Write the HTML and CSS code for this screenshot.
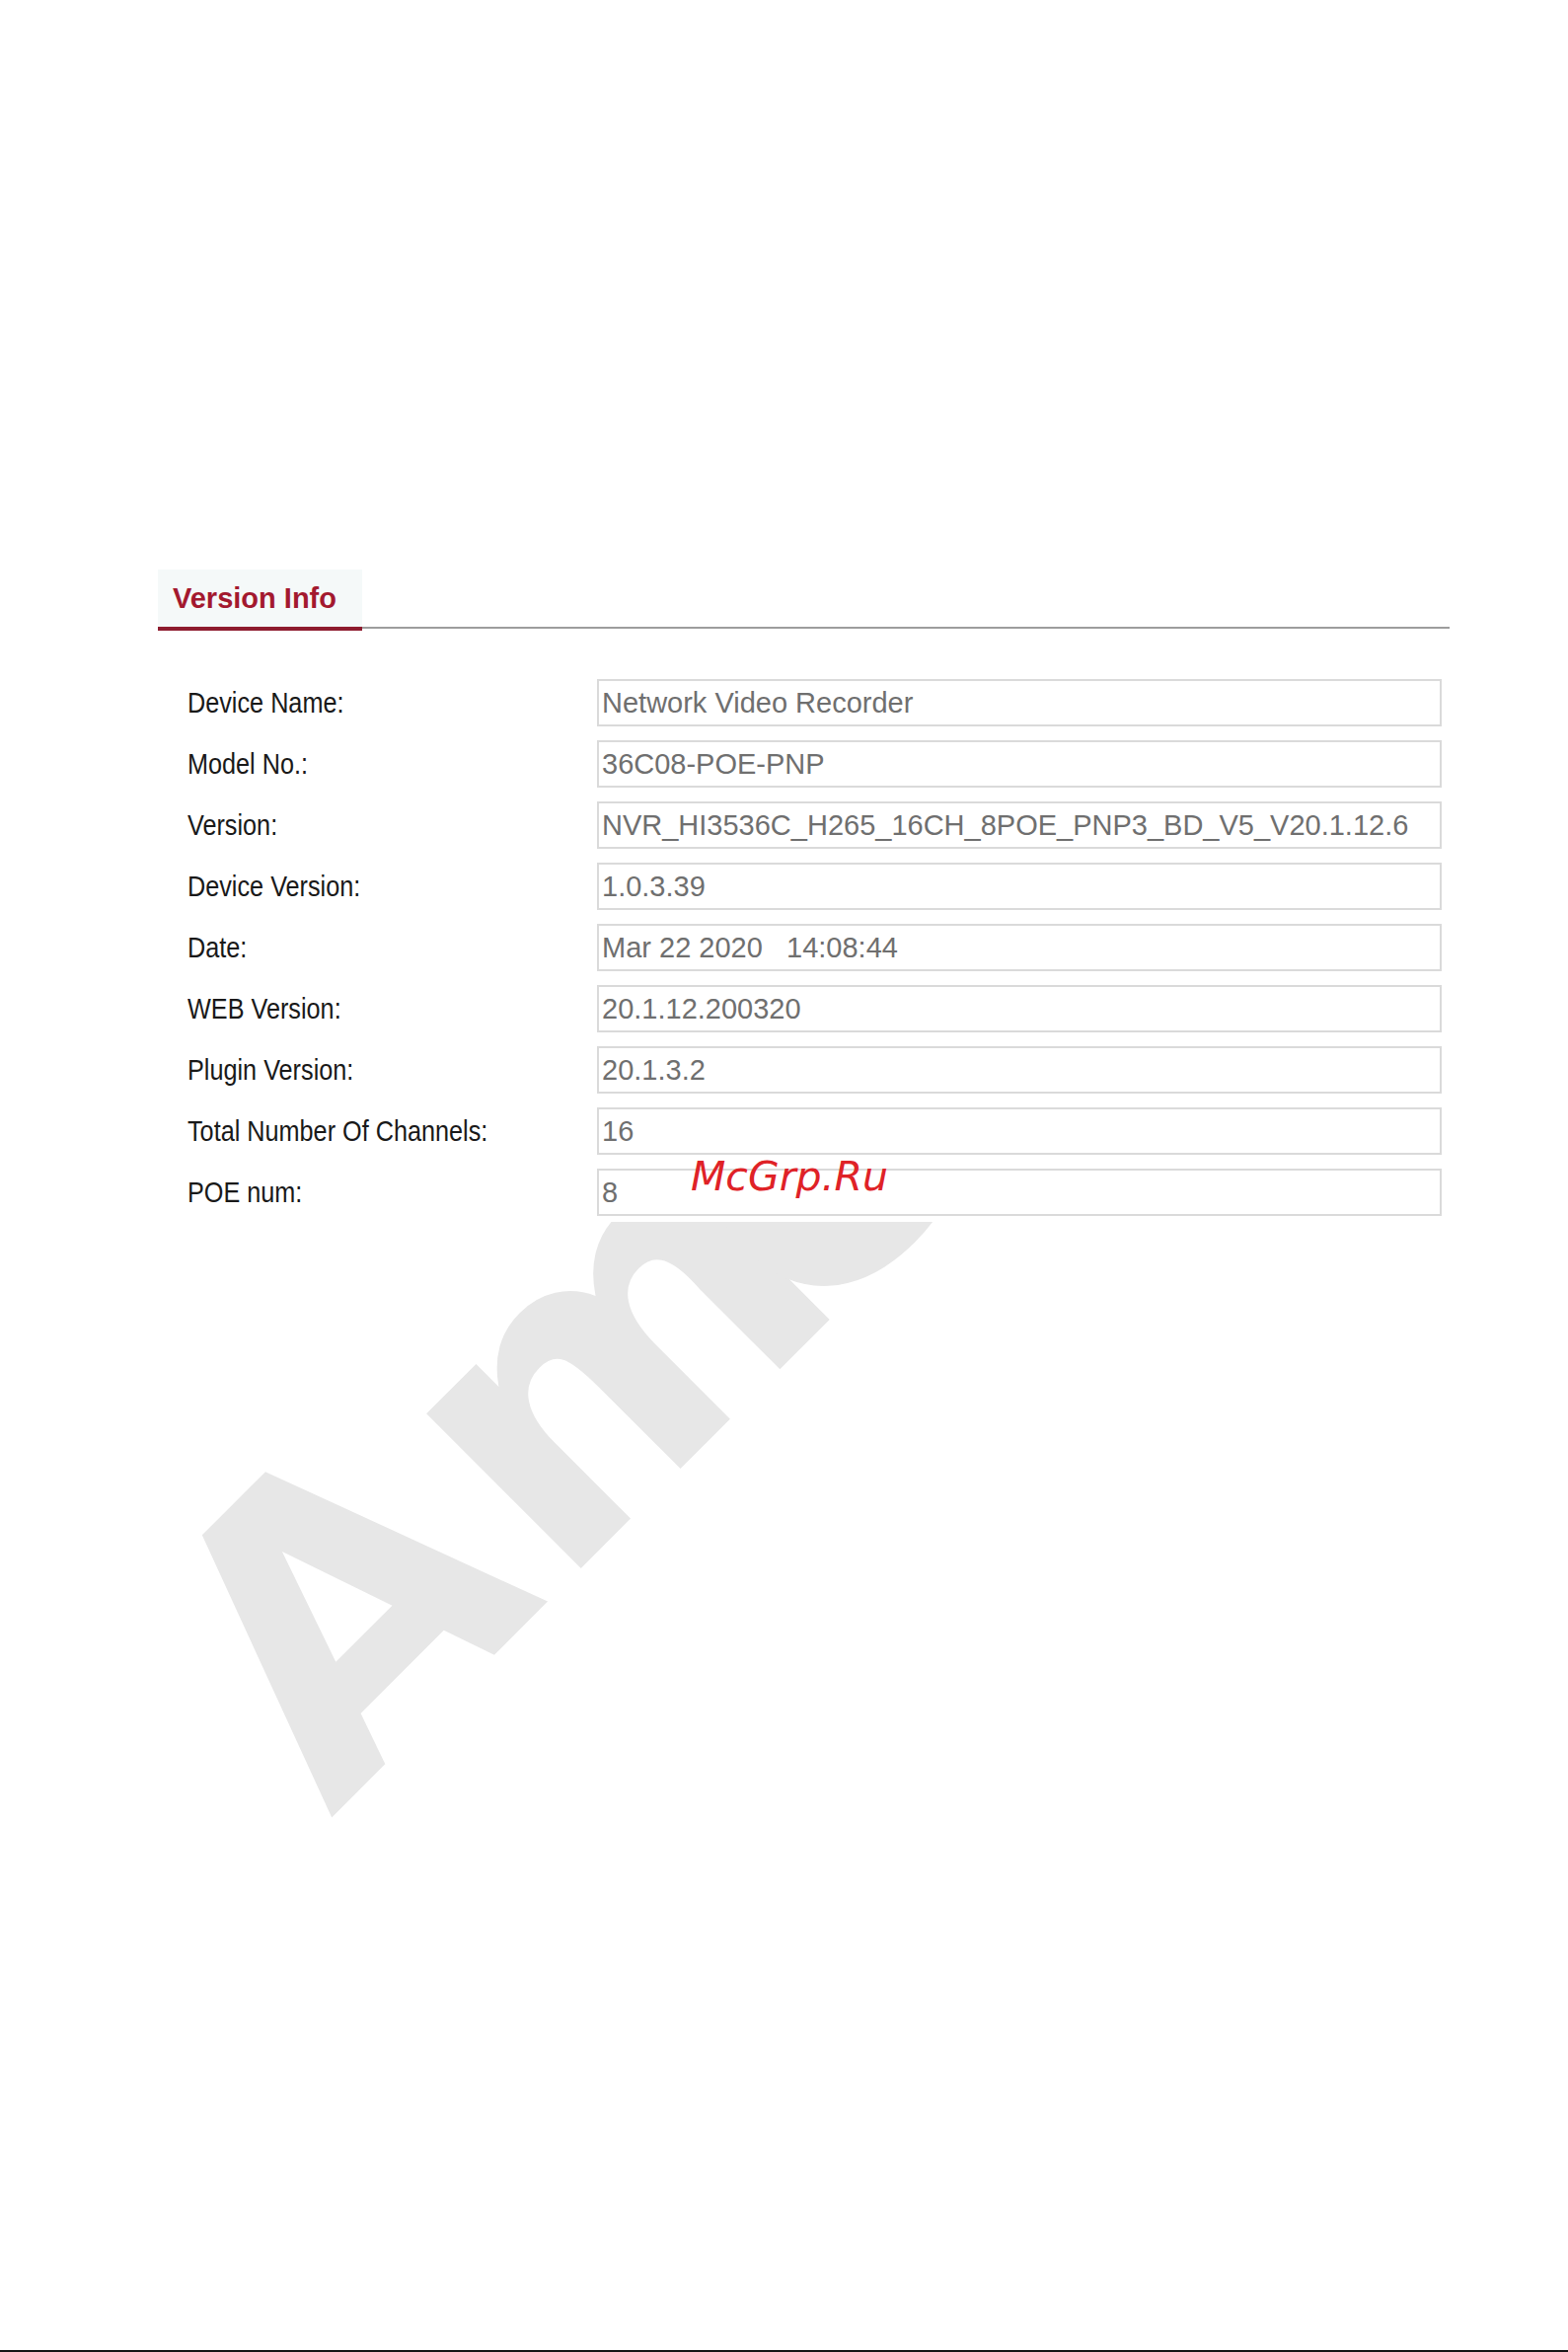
FILE: index.html
```html
<!DOCTYPE html>
<html lang="en">
<head>
<meta charset="utf-8">
<title>Version Info</title>
<link rel="stylesheet" href="styles.css">
</head>
<body>
<div class="page">
  <section class="panel">
    <div class="tabbar">
      <div class="tab">Version Info</div>
    </div>
    <div class="form">
      <div class="label"><span>Device Name:</span></div>
      <div class="field">Network Video Recorder</div>
      <div class="label"><span>Model No.:</span></div>
      <div class="field">36C08-POE-PNP</div>
      <div class="label"><span>Version:</span></div>
      <div class="field">NVR_HI3536C_H265_16CH_8POE_PNP3_BD_V5_V20.1.12.6</div>
      <div class="label"><span>Device Version:</span></div>
      <div class="field">1.0.3.39</div>
      <div class="label"><span>Date:</span></div>
      <div class="field">Mar 22 2020   14:08:44</div>
      <div class="label"><span>WEB Version:</span></div>
      <div class="field">20.1.12.200320</div>
      <div class="label"><span>Plugin Version:</span></div>
      <div class="field">20.1.3.2</div>
      <div class="label"><span>Total Number Of Channels:</span></div>
      <div class="field">16</div>
      <div class="label"><span>POE num:</span></div>
      <div class="field">8</div>
    </div>
  </section>
  <div class="wm-area">
    <span class="wm-text"><span class="wm-a">A</span><span class="wm-m">m</span>crest</span>
  </div>
  <div class="bottom-rule"></div>
  <div class="stamp">McGrp.Ru</div>
</div>
</body>
</html>
```

FILE: styles.css
```css
html, body {
  margin: 0;
  padding: 0;
  background: #ffffff;
}

.page {
  position: relative;
  height: 2383px;
  display: flex;
  flex-direction: column;
  overflow: hidden;
  font-family: "Liberation Sans", Arial, sans-serif;
}

.panel {
  position: relative;
  z-index: 1;
  background: #ffffff;
  padding: 577px 120px 6px 160px;
}

.tabbar {
  display: flex;
  border-bottom: 2px solid #9d9d9d;
}

.tab {
  box-sizing: border-box;
  width: 207px;
  height: 62px;
  padding-left: 15px;
  line-height: 58px;
  margin-bottom: -4px;
  background: #f5f9f9;
  border-bottom: 4px solid #8e1c2f;
  color: #a3192f;
  font-size: 29px;
  font-weight: bold;
  white-space: nowrap;
}

.form {
  display: grid;
  grid-template-columns: 415px 856px;
  row-gap: 14px;
  margin-top: 51px;
  padding-left: 30px;
}

.label {
  height: 48px;
  line-height: 48px;
  font-size: 29px;
  color: #191919;
  white-space: nowrap;
}

.label span {
  display: inline-block;
  transform: scaleX(0.87);
  transform-origin: left center;
}

.field {
  box-sizing: border-box;
  height: 48px;
  border: 2px solid #dadada;
  padding-left: 3px;
  line-height: 44px;
  font-size: 29px;
  color: #6f6f6f;
  white-space: pre;
  background: #ffffff;
}

.wm-area {
  position: relative;
  flex: 1;
  overflow: hidden;
}

.wm-text {
  position: absolute;
  left: 93px;
  top: 363px;
  transform-origin: 0 0;
  transform: rotate(-45deg);
  font-family: "DejaVu Sans", sans-serif;
  font-weight: bold;
  font-size: 405px;
  line-height: 1;
  color: #e7e7e7;
  white-space: nowrap;
}

.wm-a {
  letter-spacing: 12px;
}

.wm-m {
  letter-spacing: -60px;
}

.bottom-rule {
  height: 2px;
  background: #151515;
}

.stamp {
  position: absolute;
  z-index: 2;
  left: 700px;
  top: 1172px;
  font-family: "DejaVu Sans", sans-serif;
  font-style: oblique;
  font-size: 41px;
  line-height: 1;
  color: #df2227;
  white-space: nowrap;
}
```
